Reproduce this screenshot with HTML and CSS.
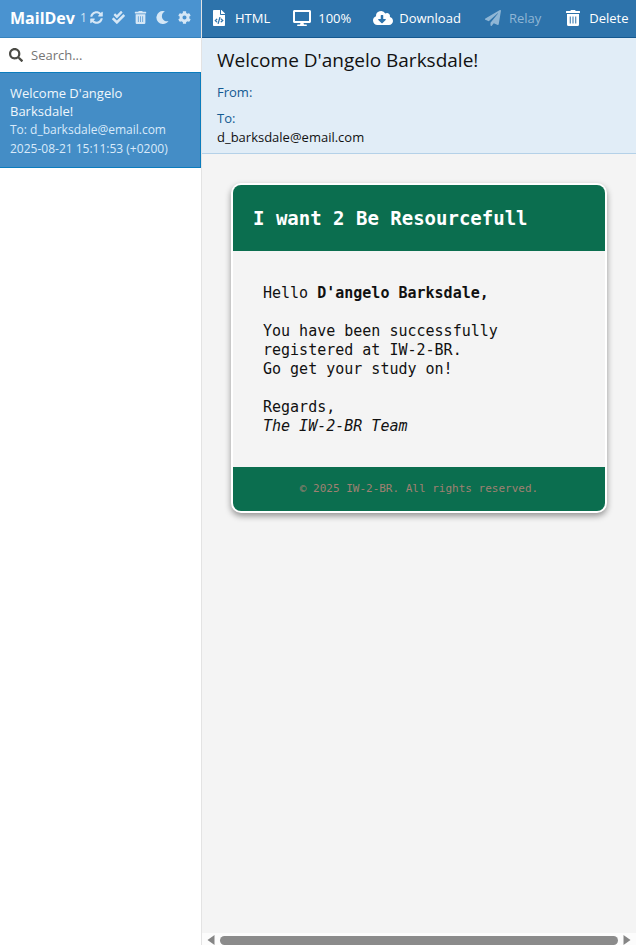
FILE: index.html
```html
<!DOCTYPE html>
<html lang="en">
<head>
<meta charset="utf-8">
<meta name="viewport" content="width=device-width, initial-scale=1">
<title>MailDev</title>
<link rel="stylesheet" href="styles.css">
</head>
<body>
<div class="app">
  <aside class="sidebar">
    <header class="brand-bar">
      <h1 class="brand">MailDev</h1>
      <span class="version">1</span>
      <nav class="tools">
        <button type="button" aria-label="Refresh"><svg viewBox="0 0 512 512"><path d="M371 134c-31-30-72-47-115-46-77 0-144 53-163 126-1 5-6 10-12 10H24c-8 0-13-7-12-14C33 94 134 8 256 8c66 0 127 26 171 69l36-36c15-15 41-4 41 17v134c0 13-11 24-24 24H346c-21 0-32-26-17-41zM32 296h134c21 0 32 26 17 41l-42 41c31 30 72 46 116 46 77 0 143-53 162-126 1-5 6-10 12-10h57c8 0 13 7 12 14-21 116-122 202-244 202-66 0-127-26-172-69l-35 36c-15 15-41 4-41-17V320c0-13 11-24 24-24z"/></svg></button>
        <button type="button" aria-label="Mark all read"><svg viewBox="0 0 512 512"><path d="M505 174.800l-39.600-39.600c-9.400-9.400-24.600-9.400-33.900 0L192 374.700 80.600 263.200c-9.400-9.400-24.600-9.400-33.900 0L7 302.900c-9.400 9.400-9.400 24.600 0 34L175 505c9.400 9.400 24.600 9.400 33.900 0l296-296.200c9.400-9.500 9.400-24.700.1-34zm-324.300 106c6.200 6.300 16.400 6.300 22.600 0l208-208.200c6.200-6.300 6.200-16.400 0-22.600L366.100 4.700c-6.200-6.300-16.400-6.300-22.600 0L192 156.200l-55.400-55.500c-6.200-6.300-16.400-6.300-22.600 0L68.700 146c-6.200 6.300-6.200 16.400 0 22.600l112 112.200z"/></svg></button>
        <button type="button" aria-label="Delete all"><svg viewBox="0 0 448 512"><path fill-rule="evenodd" d="M32 464a48 48 0 0 0 48 48h288a48 48 0 0 0 48-48V128H32zm266-256h28v224h-28zm-88 0h28v224h-28zm-88 0h28v224h-28zM432 32H312l-9-19a24 24 0 0 0-22-13H167a24 24 0 0 0-22 13l-9 19H16A16 16 0 0 0 0 48v32a16 16 0 0 0 16 16h416a16 16 0 0 0 16-16V48a16 16 0 0 0-16-16z"/></svg></button>
        <button type="button" aria-label="Dark mode"><svg viewBox="0 0 512 512"><path d="M283 512c79 0 151-36 199-94 7-9-1-22-12-19-124 23-238-71-238-196 0-72 39-138 101-174 10-5 7-20-4-22A256 256 0 1 0 283 512z"/></svg></button>
        <button type="button" aria-label="Settings"><svg viewBox="0 0 512 512"><path fill-rule="evenodd" d="M487 316l-42-25c4-23 4-47 0-70l42-25c5-3 7-8 6-14-11-36-30-68-55-94-4-4-10-5-15-2l-42 24c-18-15-39-27-61-35V26c0-5-4-10-10-12-37-8-75-8-110 0-5 1-9 6-9 12v49c-22 8-43 20-61 35L87 86c-5-3-11-2-14 2-25 27-44 59-55 94-2 6 0 11 5 14l43 25c-5 23-5 47 0 70l-43 25c-5 3-7 8-5 14 11 35 30 68 55 94 3 4 9 5 14 2l43-24c18 15 39 27 61 35v49c0 6 4 11 9 12 37 8 75 8 110 0 6-1 10-6 10-12v-49c22-8 43-20 61-35l42 24c5 3 11 2 15-2 25-27 44-59 55-94 1-6-1-11-6-14zM256 336a80 80 0 1 1 0-160 80 80 0 0 1 0 160z"/></svg></button>
      </nav>
    </header>
    <label class="search">
      <svg viewBox="0 0 512 512" aria-hidden="true"><path fill-rule="evenodd" d="M505 443L405 343c-4-5-11-7-17-7h-16c28-35 44-80 44-128C416 93 323 0 208 0S0 93 0 208s93 208 208 208c48 0 93-16 128-44v16c0 6 2 13 7 17l100 100c9 9 24 9 34 0l28-28c9-10 9-25 0-34zM208 336a128 128 0 1 1 0-256 128 128 0 0 1 0 256z"/></svg>
      <input type="search" placeholder="Search..." aria-label="Search">
    </label>
    <a class="mail-item" href="#mail">
      <span class="mail-subject">Welcome D'angelo Barksdale!</span>
      <span class="mail-meta">To: d_barksdale@email.com</span>
      <span class="mail-meta">2025-08-21 15:11:53 (+0200)</span>
    </a>
  </aside>

  <main class="content" id="mail">
    <nav class="toolbar">
      <button type="button"><svg viewBox="0 0 384 512"><path fill-rule="evenodd" d="M384 122v6H256V0h6c6 0 13 3 17 7l98 98c4 4 7 11 7 17zM248 160c-13 0-24-11-24-24V0H24C11 0 0 11 0 24v464c0 13 11 24 24 24h336c13 0 24-11 24-24V160zM123 401c-2 3-6 3-8 0l-65-61c-3-2-3-6 0-8l65-61c2-3 6-3 8 0l20 21c2 3 2 6-1 8l-40 36 40 36c3 3 3 6 1 9zm51 50l-27-8c-3-1-5-4-4-7l61-209c1-3 4-5 7-4l27 8c3 1 5 4 4 7l-61 209c-1 3-4 5-7 4zm160-111l-65 61c-2 3-6 3-8 0l-20-21c-2-3-2-6 1-9l40-36-40-36c-3-2-3-5-1-8l20-21c2-3 6-3 8 0l65 61c3 3 3 7 0 9z"/></svg>HTML</button>
      <button type="button"><svg viewBox="0 0 576 512"><path fill-rule="evenodd" d="M528 0H48C21 0 0 21 0 48v320c0 27 21 48 48 48h192l-16 48h-72c-13 0-24 11-24 24s11 24 24 24h272c13 0 24-11 24-24s-11-24-24-24h-72l-16-48h192c27 0 48-21 48-48V48c0-27-21-48-48-48zm-16 352H64V64h448z"/></svg>100%</button>
      <button type="button"><svg viewBox="0 0 640 512"><path fill-rule="evenodd" d="M538 227c4-11 6-23 6-35 0-53-43-96-96-96-20 0-38 6-53 16A160 160 0 0 0 96 200C40 220 0 273 0 336c0 80 64 144 144 144h368c71 0 128-57 128-128 0-62-44-114-102-125zm-133 89L299 421c-6 7-16 7-22 0L171 316c-10-11-3-28 11-28h66V176c0-9 7-16 16-16h48c9 0 16 7 16 16v112h66c14 0 21 17 11 28z"/></svg>Download</button>
      <button type="button" class="muted"><svg viewBox="0 0 512 512"><path d="M476 3L12 271c-18 10-16 35 1 43l107 45L408 105c5-5 13 2 8 8L175 407v80c0 24 28 33 42 16l64-78 125 53c14 6 31-3 33-19l72-432c4-20-18-34-35-24z"/></svg>Relay</button>
      <button type="button"><svg viewBox="0 0 448 512"><path fill-rule="evenodd" d="M32 464a48 48 0 0 0 48 48h288a48 48 0 0 0 48-48V128H32zm264-256h32v224h-32zm-88 0h32v224h-32zm-88 0h32v224h-32zM432 32H312l-9-19a24 24 0 0 0-22-13H167a24 24 0 0 0-22 13l-9 19H16A16 16 0 0 0 0 48v32a16 16 0 0 0 16 16h416a16 16 0 0 0 16-16V48a16 16 0 0 0-16-16z"/></svg>Delete</button>
    </nav>

    <section class="details">
      <h2>Welcome D'angelo Barksdale!</h2>
      <dl>
        <div><dt>From:</dt></div>
        <div><dt>To:</dt><dd>d_barksdale@email.com</dd></div>
      </dl>
    </section>

    <section class="preview">
      <article class="card">
        <h3 class="card-title">I want 2 Be Resourcefull</h3>
        <div class="card-body">
          <p>Hello <strong>D'angelo Barksdale,</strong></p>
          <p>You have been successfully<br>registered at IW-2-BR.<br>Go get your study on!</p>
          <p>Regards,<br><em>The IW-2-BR Team</em></p>
        </div>
        <footer class="card-footer">© 2025 IW-2-BR. All rights reserved.</footer>
      </article>
    </section>

    <div class="scrollbar" aria-hidden="true">
      <svg viewBox="0 0 8 10"><path d="M8 0v10L1 5z"/></svg>
      <span class="thumb"></span>
      <svg viewBox="0 0 8 10"><path d="M0 0v10l7-5z"/></svg>
    </div>
  </main>
</div>
</body>
</html>
```
FILE: styles.css
```css
* {
  box-sizing: border-box;
}

body {
  margin: 0;
  font-family: "Open Sans", "Noto Sans", sans-serif;
  font-size: 13px;
  color: #111;
}

h1, h2, h3, p, dl, dd {
  margin: 0;
}

button {
  font: inherit;
  color: inherit;
  background: none;
  border: 0;
  padding: 0;
}

svg {
  display: block;
  fill: currentColor;
}

.app {
  display: grid;
  grid-template-columns: 202px minmax(0, 1fr);
  min-height: 100vh;
}

/* Sidebar */
.sidebar {
  background: #fff;
  border-right: 1px solid #e3e3e3;
}

.brand-bar {
  display: flex;
  align-items: center;
  height: 38px;
  padding: 0 10px 2px;
  background: #4a93d0;
  border-bottom: 1px solid #3683bd;
  color: #fff;
}

.brand {
  font-size: 16px;
  font-weight: 700;
}

.version {
  margin-left: 5px;
  font-size: 12px;
  color: #cfe3f4;
}

.tools {
  display: flex;
  gap: 9px;
  margin-left: auto;
  color: #d5e7f6;
}

.tools svg {
  width: 13px;
  height: 13px;
}

.search {
  display: flex;
  align-items: center;
  gap: 8px;
  height: 34px;
  padding: 0 9px;
}

.search svg {
  width: 14px;
  height: 14px;
  color: #4b4b45;
}

.search input {
  flex: 1;
  min-width: 0;
  border: 0;
  padding: 0;
  font: inherit;
  background: none;
  outline: 0;
}

.search input::placeholder {
  color: #757575;
}

.mail-item {
  display: flex;
  flex-direction: column;
  padding: 11px 20px 9px 10px;
  background: #448dc6;
  border: solid #0b7cbd;
  border-width: 1px 1px 1px 0;
  color: #f0f7fc;
  text-decoration: none;
  line-height: 18px;
}

.mail-meta {
  font-size: 12px;
  line-height: 19px;
  color: #d9eafa;
}

/* Message pane */
.content {
  display: flex;
  flex-direction: column;
  background: #f4f4f4;
}

.toolbar {
  display: flex;
  gap: 22px;
  height: 38px;
  padding: 0 0 2px 7px;
  overflow: hidden;
  background: #2d73ab;
  border-bottom: 1px solid #14588f;
  color: #fff;
}

.toolbar button {
  display: flex;
  align-items: center;
  gap: 6px;
}

.toolbar svg {
  width: 20px;
  height: 16px;
}

.toolbar .muted {
  color: #8fb6d5;
}

.details {
  padding: 8px 15px 6px;
  background: #e1edf7;
  border-bottom: 1px solid #b4d1e8;
}

.details h2 {
  font-size: 19px;
  font-weight: 400;
  line-height: 28px;
}

.details dl {
  display: grid;
  gap: 7px;
  margin-top: 9px;
  line-height: 19px;
}

.details dt {
  color: #135a92;
}

.preview {
  flex: 1;
  padding: 29px;
}

.card {
  overflow: hidden;
  border: 2px solid #fff;
  border-radius: 10px;
  background: #f4f4f4;
  box-shadow: 0 3px 6px rgba(0, 0, 0, 0.4);
  font-family: "DejaVu Sans Mono", monospace;
}

.card-title {
  padding: 20px;
  background: #0b6e4f;
  color: #fff;
  font-size: 19px;
  line-height: 26px;
}

.card-body {
  display: grid;
  gap: 19px;
  padding: 33px 30px 31px;
  font-size: 15px;
  line-height: 19px;
}

.card-footer {
  padding: 12px;
  background: #0b6e4f;
  color: #a08072;
  font-size: 11px;
  line-height: 20px;
  text-align: center;
}

.scrollbar {
  display: flex;
  align-items: center;
  gap: 5px;
  height: 12px;
  padding: 2px 4px 0;
  background: #fcfcfc;
  color: #858585;
}

.scrollbar svg {
  width: 9px;
  height: 10px;
}

.thumb {
  flex: 1;
  height: 9px;
  border-radius: 5px;
  background: #8b8b8b;
}
```
